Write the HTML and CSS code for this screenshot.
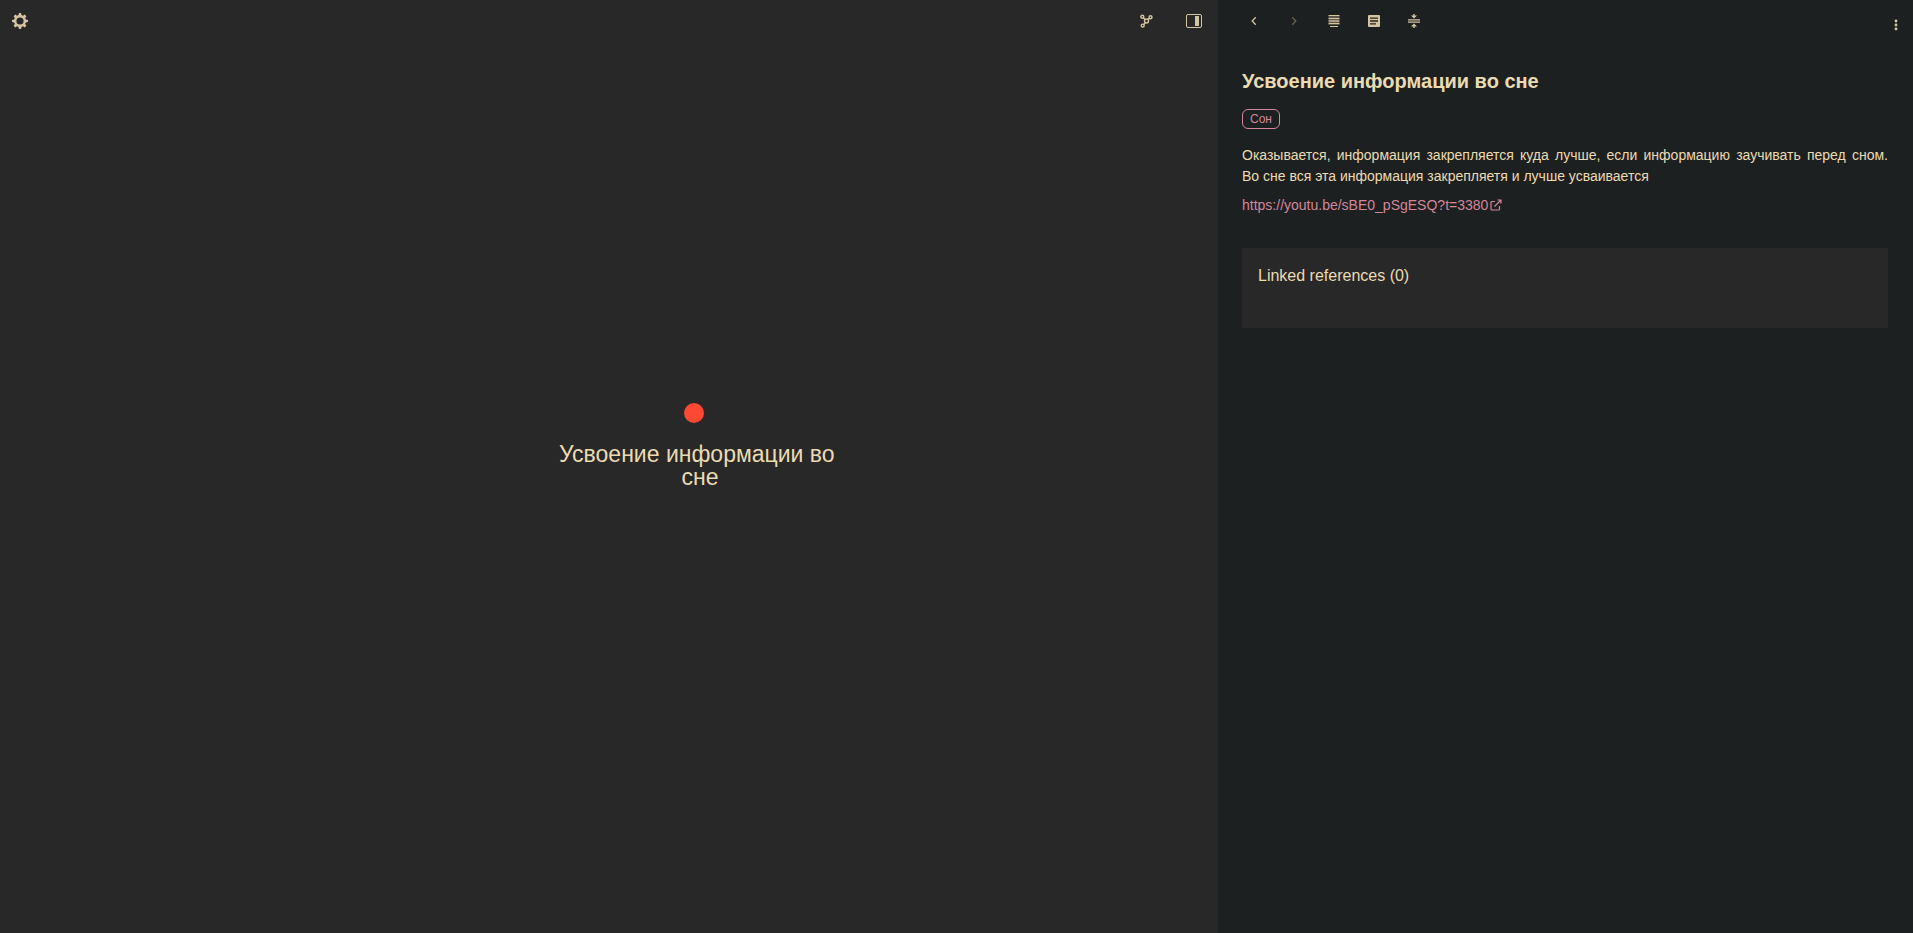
FILE: index.html
```html
<!DOCTYPE html>
<html lang="ru">
<head>
<meta charset="utf-8">
<title>Усвоение информации во сне</title>
<link rel="stylesheet" href="styles.css">
</head>
<body>
<div class="app">
  <main class="graph">
    <header class="graph-bar">
      <button class="icon-button" aria-label="Settings">
        <svg width="16" height="16" viewBox="0 0 16 16"><path fill="currentColor" fill-rule="evenodd" d="M6.900 0h2.200l.4 2.100 1.500.6L12.700 1.500l1.700 1.700L13.200 5l.6 1.500 2.200.4v2.200l-2.200.4-.6 1.500 1.200 1.800-1.700 1.700L11 13.300l-1.500.6L9.100 16H6.900l-.4-2.100-1.500-.6-1.700 1.200-1.700-1.700L2.800 11l-.6-1.500L0 9.100V6.900l2.200-.4L2.800 5 1.600 3.200l1.700-1.700L5 2.700l1.500-.6zM8 4.400a3.600 3.600 0 1 0 0 7.200 3.600 3.600 0 0 0 0-7.200z"/></svg>
      </button>
      <div class="graph-actions">
        <button class="icon-button" aria-label="Local graph">
          <svg width="14" height="14" viewBox="0 0 14 14" fill="none" stroke="currentColor" stroke-width="1.400"><circle cx="3.300" cy="2.800" r="1.500"/><circle cx="11.500" cy="3.200" r="1.500"/><circle cx="7.500" cy="7" r="2"/><circle cx="3.700" cy="11.600" r="1.500"/><path d="M4.400 3.900l1.700 1.600M10.400 4.200L9 5.600M6.300 8.600l-1.600 1.900"/></svg>
        </button>
        <button class="icon-button" aria-label="Toggle side panel">
          <svg width="16" height="14" viewBox="0 0 16 14"><rect x=".5" y=".5" width="15" height="13" rx="1.500" fill="none" stroke="currentColor"/><path fill="currentColor" d="M9 2h4v10H9z"/></svg>
        </button>
      </div>
    </header>
    <div class="canvas">
      <div class="node">
        <span class="node-dot"></span>
        <span class="node-label">Усвоение информации во&nbsp;<br>сне</span>
      </div>
    </div>
  </main>
  <aside class="sidebar">
    <header class="sidebar-bar">
      <div class="sidebar-actions">
        <button class="icon-button" aria-label="Back">
          <svg width="12" height="12" viewBox="0 0 12 12" fill="none" stroke="currentColor" stroke-width="1.300"><path d="M7.700 2.300L4.200 6l3.500 3.700"/></svg>
        </button>
        <button class="icon-button" aria-label="Forward" disabled>
          <svg width="12" height="12" viewBox="0 0 12 12" fill="none" stroke="currentColor" stroke-width="1.300"><path d="M4.300 2.300L7.800 6 4.300 9.700"/></svg>
        </button>
        <button class="icon-button" aria-label="Justify content">
          <svg width="12" height="12" viewBox="0 0 12 12" fill="currentColor"><path d="M.5 0h11v1H.5zM.5 3h11v1H.5zM.5 8h11v1H.5zM2 11h8v1H2z"/><path opacity=".75" d="M.5 5h11v2H.5z"/><path opacity=".35" d="M.5 1h11v2H.5zM.5 4h11v1H.5zM.5 7h11v1H.5zM.5 9h11v1H.5z"/></svg>
        </button>
        <button class="icon-button" aria-label="Toggle headings">
          <svg width="12" height="12" viewBox="0 0 12 12"><path fill="currentColor" fill-rule="evenodd" d="M1 0h10a1 1 0 0 1 1 1v10a1 1 0 0 1-1 1H1a1 1 0 0 1-1-1V1a1 1 0 0 1 1-1zM2 2.400v1.300h8V2.400zM2 5.300v1.400h8V5.300zM2 8.300v1.300h6V8.300z"/></svg>
        </button>
        <button class="icon-button" aria-label="Collapse headings">
          <svg width="12" height="14" viewBox="0 0 12 14" fill="currentColor"><path d="M5.300 0h1.400v1.500H9L6 4.600 3 1.500h2.300zM0 5.300h12v1.200H0zM0 7.500h12v1.200H0zM6 9.400l3 3.100H6.700V14H5.300v-1.500H3z"/></svg>
        </button>
      </div>
      <button class="icon-button menu-button" aria-label="Options">
        <svg width="4" height="12" viewBox="0 0 4 12" fill="currentColor"><circle cx="2" cy="2" r="1.400"/><circle cx="2" cy="6" r="1.400"/><circle cx="2" cy="10" r="1.400"/></svg>
      </button>
    </header>
    <article class="note">
      <h1 class="note-title">Усвоение информации во сне</h1>
      <button class="tag">Сон</button>
      <p class="note-text">Оказывается, информация закрепляется куда лучше, если информацию заучивать перед сном. Во сне вся эта информация закрепляетя и лучше усваивается</p>
      <p class="note-text"><a class="link" href="https://youtu.be/sBE0_pSgESQ?t=3380">https://youtu.be/sBE0_pSgESQ?t=3380<svg class="link-icon" width="12" height="12" viewBox="0 0 12 12" fill="none" stroke="currentColor" stroke-width="1.200"><path d="M5 2.500H2a1 1 0 0 0-1 1V10a1 1 0 0 0 1 1h6.500a1 1 0 0 0 1-1V7M4.500 7.500l6-6M7.500 1H11v3.500"/></svg></a></p>
      <section class="references">
        <h2 class="references-title">Linked references (0)</h2>
      </section>
    </article>
  </aside>
</div>
</body>
</html>
```
FILE: styles.css
```css
* {
  box-sizing: border-box;
}

body {
  margin: 0;
  background: #282828;
  color: #ebdbb2;
  font-family: "Liberation Sans", Arial, sans-serif;
  font-size: 14px;
  line-height: 21px;
}

.app {
  display: flex;
  min-height: 100vh;
}

.graph {
  flex: 1;
  display: flex;
  flex-direction: column;
}

.graph-bar {
  display: flex;
  justify-content: space-between;
  padding: 1px 4px 0 0;
}

.graph-actions {
  display: flex;
  gap: 8px;
}

.icon-button {
  display: flex;
  align-items: center;
  justify-content: center;
  width: 40px;
  height: 40px;
  padding: 0;
  border: 0;
  background: none;
  color: #d5c4a1;
  cursor: pointer;
}

.icon-button:disabled {
  opacity: 0.4;
  cursor: default;
}

.canvas {
  flex: 1;
  position: relative;
}

.node {
  position: absolute;
  top: 362px;
  left: 556px;
  width: 288px;
  display: flex;
  flex-direction: column;
  align-items: center;
  gap: 20px;
}

.node-dot {
  width: 20px;
  height: 20px;
  margin-right: 12px;
  border-radius: 50%;
  background: #fb4934;
}

.node-label {
  font-size: 23px;
  line-height: 23px;
  text-align: center;
}

.sidebar {
  width: 695px;
  background: #1d2021;
}

.sidebar-bar {
  display: flex;
  justify-content: space-between;
  padding: 1px 7px 0 16px;
}

.sidebar-actions {
  display: flex;
}

.menu-button {
  width: 20px;
  height: 48px;
}

.note {
  padding: 20px 25px 24px 24px;
}

.note-title {
  margin: 0 0 16px;
  font-size: 20px;
  line-height: 24px;
}

.tag {
  display: block;
  height: 20px;
  margin: 0 0 16px;
  padding: 0 7px;
  border: 1px solid #d3869b;
  border-radius: 6px;
  background: none;
  color: #d3869b;
  font: 12px/18px "Liberation Sans", Arial, sans-serif;
}

.note-text {
  margin: 0 0 8px;
  text-align: justify;
}

.link {
  color: #d3869b;
  text-decoration: none;
}

.link-icon {
  margin-left: 2px;
  vertical-align: -1px;
}

.references {
  min-height: 80px;
  margin-top: 32px;
  padding: 16px;
  border-radius: 2px;
  background: #282828;
}

.references-title {
  margin: 0;
  font-size: 16px;
  font-weight: 400;
  line-height: 24px;
}
```
